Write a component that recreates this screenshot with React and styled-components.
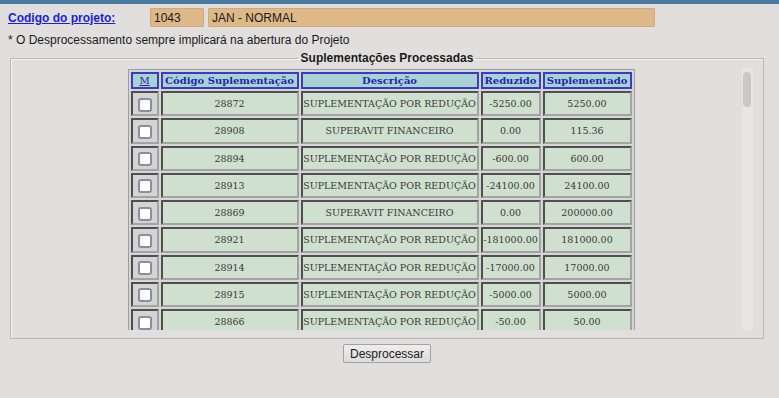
import React from "react";
import styled, { createGlobalStyle } from "styled-components";

const Global = createGlobalStyle`
  html, body { margin: 0; padding: 0; }
  body {
    background: #e0dfdd;
    font-family: "Liberation Sans", Arial, sans-serif;
    font-size: 12px;
    color: #1a1a1a;
    overflow: hidden;
  }
`;

const TopBar = styled.div`
  height: 4px;
  background: #4b7aa1;
`;

const ProjectRow = styled.div`
  display: flex;
  align-items: center;
  padding: 4px 0 0 8px;
  height: 19px;
`;

const ProjectLink = styled.a`
  width: 142px;
  font-weight: bold;
  font-size: 12px;
  color: #1c1ce6;
  text-decoration: underline;
  cursor: pointer;
`;

const Field = styled.div`
  box-sizing: border-box;
  width: ${(p) => p.$w}px;
  height: 19px;
  margin-right: 4px;
  padding: 2px 3px 0;
  background: #dfb887;
  border: 1px solid #cfa979;
  border-radius: 1px;
  font-size: 12px;
  color: #1a1a1a;
`;

const Note = styled.div`
  padding: 6px 0 0 8px;
  line-height: 14px;
`;

const Box = styled.fieldset`
  box-sizing: border-box;
  width: 754px;
  margin: 4px 0 0 10px;
  padding: 3px 9px 8px 9px;
  border: 1px solid #b9b8b6;
  box-shadow: inset 1px 1px 0 #f2f2f2;
`;

const Legend = styled.legend`
  margin: 0 auto;
  padding: 0 3px;
  font-weight: bold;
  font-size: 12px;
  color: #1a1a1a;
`;

const Scroller = styled.div`
  display: flex;
  height: 262px;
`;

const Viewport = styled.div`
  flex: 1;
  overflow: hidden;
  display: flex;
  justify-content: center;
  align-items: flex-start;
`;

const Track = styled.div`
  flex: none;
  width: 11px;
  margin-right: 1px;
  padding: 4px 2px 0 1px;
  box-sizing: border-box;
  background: #e7e6e4;
`;

const Thumb = styled.div`
  height: 35px;
  border-radius: 4px;
  background: #c9c8c6;
`;

const Table = styled.table`
  border-collapse: separate;
  border-spacing: 2px;
  border: 1px solid #9d9d9d;
  background: #d6d6d6;
  margin-top: 1px;
  flex: none;
`;

const Head = styled.th`
  box-sizing: border-box;
  width: ${(p) => p.$w}px;
  height: 17px;
  padding: 0;
  background: #a9d3d3;
  border: 2px solid #3a3acb;
  font-family: "DejaVu Serif", serif;
  font-weight: bold;
  font-size: 10px;
  line-height: 12px;
  color: #2424b4;
  white-space: nowrap;
  text-align: center;
`;

const MarkLink = styled.a`
  font-weight: normal;
  text-decoration: underline;
  color: #2424b4;
`;

const Cell = styled.td`
  box-sizing: border-box;
  height: 25.25px;
  padding: 0;
  border: 2px inset #a3a3a3;
  background: ${(p) => (p.$check ? "#d4d4d4" : "#d0e0ce")};
  font-family: "DejaVu Serif", serif;
  font-size: 9.5px;
  color: #383838;
  text-align: center;
  white-space: nowrap;
`;

const Check = styled.span`
  display: inline-block;
  box-sizing: border-box;
  width: 14px;
  height: 14px;
  margin-top: 2px;
  background: #ffffff;
  border: 2px solid #8c8ca6;
  border-radius: 3px;
  vertical-align: middle;
`;

const Actions = styled.div`
  display: flex;
  justify-content: center;
  width: 754px;
  margin: 5px 0 0 10px;
`;

const Button = styled.button`
  box-sizing: border-box;
  width: 88px;
  height: 19px;
  padding: 0;
  font-family: "Liberation Sans", Arial, sans-serif;
  font-size: 12px;
  color: #1a1a1a;
  background: linear-gradient(#eeeeee, #dcdcdc);
  border: 1px solid #a2a2a2;
  border-radius: 2px;
`;

const RED = "SUPLEMENTAÇÃO POR REDUÇÃO";
const SUP = "SUPERAVIT FINANCEIRO";

const rows = [
  ["28872", RED, "-5250.00", "5250.00"],
  ["28908", SUP, "0.00", "115.36"],
  ["28894", RED, "-600.00", "600.00"],
  ["28913", RED, "-24100.00", "24100.00"],
  ["28869", SUP, "0.00", "200000.00"],
  ["28921", RED, "-181000.00", "181000.00"],
  ["28914", RED, "-17000.00", "17000.00"],
  ["28915", RED, "-5000.00", "5000.00"],
  ["28866", RED, "-50.00", "50.00"],
];

export default function App() {
  return (
    <>
      <Global />
      <TopBar />
      <ProjectRow>
        <ProjectLink>Codigo do projeto:</ProjectLink>
        <Field $w={54}>1043</Field>
        <Field $w={447}>JAN - NORMAL</Field>
      </ProjectRow>
      <Note>* O Desprocessamento sempre implicará na abertura do Projeto</Note>
      <Box>
        <Legend>Suplementações Processadas</Legend>
        <Scroller>
          <Viewport>
            <Table>
              <thead>
                <tr>
                  <Head $w={28}><MarkLink>M</MarkLink></Head>
                  <Head $w={138}>Código Suplementação</Head>
                  <Head $w={178}>Descrição</Head>
                  <Head $w={60}>Reduzido</Head>
                  <Head $w={89}>Suplementado</Head>
                </tr>
              </thead>
              <tbody>
                {rows.map((r, i) => (
                  <tr key={i}>
                    <Cell $check><Check /></Cell>
                    <Cell>{r[0]}</Cell>
                    <Cell>{r[1]}</Cell>
                    <Cell>{r[2]}</Cell>
                    <Cell>{r[3]}</Cell>
                  </tr>
                ))}
              </tbody>
            </Table>
          </Viewport>
          <Track>
            <Thumb />
          </Track>
        </Scroller>
      </Box>
      <Actions>
        <Button>Desprocessar</Button>
      </Actions>
    </>
  );
}
